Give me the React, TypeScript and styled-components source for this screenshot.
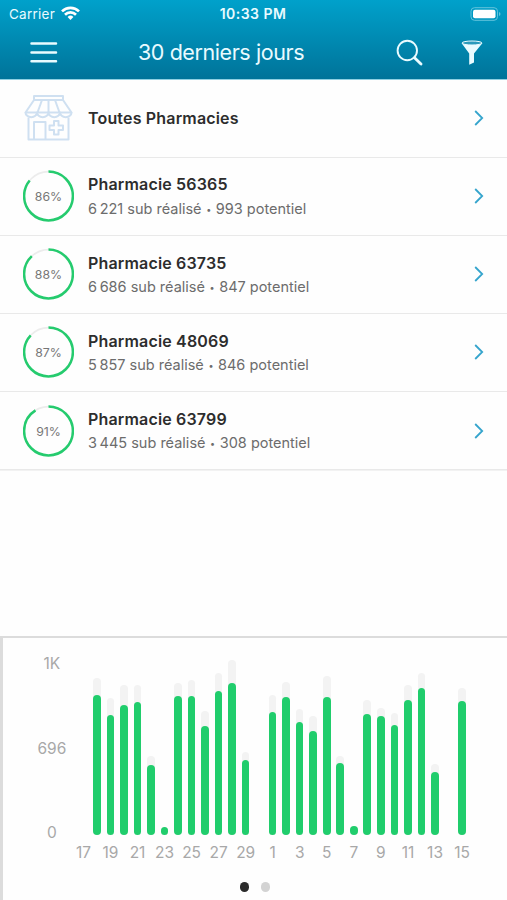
import styled, { createGlobalStyle } from 'styled-components'

const GlobalStyle = createGlobalStyle`
  * {
    box-sizing: border-box;
  }
  body {
    margin: 0;
    background: #fefefe;
    font-family: Inter, 'Liberation Sans', sans-serif;
  }
`
const Page = styled.div`
  display: flex;
  flex-direction: column;
  width: 507px;
  height: 900px;
  overflow: hidden;
`
const Header = styled.header`
  height: 79.6px;
  flex-shrink: 0;
  color: #e9fbff;
  background: linear-gradient(#00a1cb, #007399);
  border-bottom: 1px solid #8fd0e2;
`
const StatusBar = styled.div`
  display: grid;
  grid-template-columns: 1fr auto 1fr;
  align-items: center;
  height: 27px;
  padding: 0 7.5px 0 7.5px;
`
const Carrier = styled.div`
  display: flex;
  align-items: center;
  gap: 6px;
  padding-left: 1.5px;
  font-size: 13.5px;
  letter-spacing: 0.25px;
`
const Time = styled.div`
  margin-right: 1px;
  font-size: 14px;
  font-weight: 600;
  letter-spacing: 0.45px;
`
const BatteryIcon = styled.svg`
  justify-self: end;
  margin-right: -1.5px;
`
const NavBar = styled.div`
  display: grid;
  grid-template-columns: 82px 1fr 82px 60px;
  align-items: center;
  height: 52px;
`
const Title = styled.h1`
  margin: 0 0 2px 56px;
  font-size: 21.5px;
  font-weight: 400;
  line-height: 28px;
  letter-spacing: -0.42px;
  white-space: nowrap;
`
const NavButton = styled.button`
  display: flex;
  padding: 0;
  border: none;
  background: none;
  color: inherit;
`
const MenuButton = styled(NavButton)`
  padding-left: 30px;
`
const SearchButton = styled(NavButton)`
  padding-left: 30.5px;
`
const FilterButton = styled(NavButton)`
  padding-left: 14px;
`
const List = styled.ul`
  margin: 0;
  padding: 0;
  list-style: none;
  border-bottom: 1px solid #f2f2f2;
`
const Row = styled.li`
  display: flex;
  align-items: center;
  height: 78.1px;
  padding: 0 22px 0 23px;
  border-bottom: 1px solid #e9e9e9;
`
const Thumb = styled.div`
  display: flex;
  width: 65px;
  flex-shrink: 0;
`
const RowText = styled.div`
  flex: 1;
  white-space: nowrap;
`
const Name = styled.div`
  color: #2d2d2d;
  font-size: 16px;
  font-weight: 600;
  line-height: 22px;
  letter-spacing: 0.17px;
`
const Detail = styled.div`
  margin-top: 2.6px;
  color: #6c6c6c;
  font-size: 14.5px;
  line-height: 21px;
`
const Bullet = styled.span`
  margin: 0 0.5px;
  font-size: 9px;
  vertical-align: 1.5px;
  line-height: 1;
`
const RingText = styled.text`
  fill: #777;
  font-size: 12.3px;
  text-anchor: middle;
`
const Panel = styled.section`
  display: flex;
  flex-direction: column;
  height: 264px;
  margin-top: auto;
  padding-top: 16px;
  border-top: 2px solid #dcdcdc;
  border-left: 3px solid #dcdcdc;
`
const Chart = styled.div`
  display: flex;
  height: 181px;
`
const YAxis = styled.div`
  display: flex;
  flex-direction: column;
  justify-content: space-between;
  width: 73.7px;
  height: 189px;
  padding-left: 24px;
  flex-shrink: 0;
  color: #a8a8a8;
  font-size: 15.5px;
  line-height: 20px;
  text-align: center;
`
const Plot = styled.div`
  display: flex;
  align-items: flex-end;
`
const Slot = styled.div`
  display: flex;
  justify-content: center;
  width: 13.53px;
  height: 181px;
  align-items: flex-end;
`
const Track = styled.div<{ $height: number }>`
  display: flex;
  align-items: flex-end;
  width: 7.6px;
  height: ${(p) => p.$height}px;
  border-radius: 4px;
  background: #f3f3f3;
`
const Bar = styled.div<{ $height: number }>`
  width: 7.6px;
  height: ${(p) => p.$height}px;
  border-radius: 4px;
  background: #20cd6c;
`
const XAxis = styled.div`
  display: flex;
  margin: 8px 0 0 66.9px;
  color: #a8a8a8;
  font-size: 15.5px;
  line-height: 20px;
`
const Tick = styled.span`
  width: 27.06px;
  text-align: center;
`
const Pager = styled.div`
  display: flex;
  justify-content: center;
  gap: 11.5px;
  margin-top: 19px;
`
const Dot = styled.span<{ $active?: boolean }>`
  width: 9.5px;
  height: 9.5px;
  border-radius: 50%;
  background: ${(p) => (p.$active ? '#2b2b2b' : '#d3d3d3')};
`

const pharmacies = [
  { id: 56365, percent: 86, done: '6\u2009221', potential: 993 },
  { id: 63735, percent: 88, done: '6\u2009686', potential: 847 },
  { id: 48069, percent: 87, done: '5\u2009857', potential: 846 },
  { id: 63799, percent: 91, done: '3\u2009445', potential: 308 },
]

// [done, total] for each day, starting on the 17th
const days = [
  [0, 0], [140, 157], [120.3, 137.5], [129.6, 150], [132.8, 150],
  [70.3, 79.5], [7.6, 7.6], [139.3, 152], [139.3, 155], [109.3, 124],
  [143.6, 162], [152, 175.5], [74.6, 83.5], [0, 0], [123.3, 140.5],
  [137.8, 153.5], [113.5, 126], [104.5, 119.5], [138.1, 159.5], [72, 79.5],
  [9.3, 9.3], [120.8, 135.5], [118.8, 127.5], [109.8, 122.5], [134.6, 150.5],
  [147.3, 162], [62.8, 71.5], [0, 0], [133.6, 147.5],
]
const ticks = [17, 19, 21, 23, 25, 27, 29, 1, 3, 5, 7, 9, 11, 13, 15]

function Ring({ percent }: { percent: number }) {
  return (
    <svg width="51" height="52" viewBox="0 0 51 52">
      <circle cx="25.5" cy="26" r="24.4" fill="none" stroke="#ececec" strokeWidth="1.6" />
      <circle
        cx="25.5"
        cy="26"
        r="24.4"
        fill="none"
        stroke="#25cb6e"
        strokeWidth="2.5"
        pathLength="100"
        strokeDasharray={`${percent} 100`}
        transform="rotate(-90 25.5 26)"
      />
      <RingText x="25.5" y="31">{percent}%</RingText>
    </svg>
  )
}

function Shop() {
  return (
    <svg width="52" height="48" viewBox="0 0 52 48" fill="none" stroke="#cfe0f1" strokeWidth="2" strokeLinejoin="round">
      <path d="M11 2h29v4H11z" />
      <path d="M11 6 2.5 18.5h46L40 6M19 6l-4.5 12.5M25.5 6v12.5M32 6l4.5 12.5" />
      <path d="M2.5 18.5a5.75 4.7 0 0 0 11.5 0a5.75 4.7 0 0 0 11.5 0a5.75 4.7 0 0 0 11.5 0a5.75 4.7 0 0 0 11.5 0" />
      <path d="M5.5 23.5V45.5h40V23.5" />
      <path d="M11 45V28h11.5v17" />
      <path d="M31 27h4.5v4.5H40V36h-4.5v4.5H31V36h-4.5v-4.5H31z" />
    </svg>
  )
}

function Chevron() {
  return (
    <svg width="12" height="18" viewBox="0 0 12 18" fill="none" stroke="#36a5cd" strokeWidth="1.8">
      <path d="m2.2 2 7 7-7 7" />
    </svg>
  )
}

function App() {
  return (
    <Page>
      <GlobalStyle />
      <Header>
        <StatusBar>
          <Carrier>
            Carrier
            <svg width="19" height="15" viewBox="0 0 19 15" fill="none" stroke="#fff" strokeWidth="2.7">
              <path d="M1 5.4a12.2 12.2 0 0 1 17 0M4 8.7a7.8 7.8 0 0 1 11 0" />
              <path d="m9.5 14-2.9-3a4.2 4.2 0 0 1 5.8 0z" fill="#fff" stroke="none" />
            </svg>
          </Carrier>
          <Time>10:33 PM</Time>
          <BatteryIcon width="31" height="14" viewBox="0 0 31 14">
            <rect x="1" y="0.7" width="26.5" height="12.6" rx="3.5" fill="none" stroke="#63c3dc" />
            <rect x="3" y="2.7" width="22.5" height="8.6" rx="2" fill="#fff" />
            <path d="M29 5v4q1.5-.5 1.5-2T29 5" fill="#63c3dc" />
          </BatteryIcon>
        </StatusBar>
        <NavBar>
          <MenuButton>
            <svg width="28" height="24" viewBox="0 0 28 24" stroke="currentColor" strokeWidth="2.5" strokeLinecap="round">
              <path d="M1.5 2.5h24.5M1.5 11.5h24.5M1.5 20.3h24.5" />
            </svg>
          </MenuButton>
          <Title>30 derniers jours</Title>
          <SearchButton>
            <svg width="28" height="28" viewBox="0 0 28 28" fill="none" stroke="currentColor">
              <circle cx="11.3" cy="11.5" r="9.7" strokeWidth="1.9" />
              <path d="m18.5 18.8 6.5 6.2" strokeWidth="2.9" strokeLinecap="round" />
            </svg>
          </SearchButton>
          <FilterButton>
            <svg width="22" height="26" viewBox="0 0 22 26" fill="currentColor">
              <path d="M.5 3 8.2 13.500v11.300l4.800-2.300v-9L21.500 3z" />
              <ellipse cx="11" cy="3" rx="10" ry="2" fill="#2c9abb" stroke="currentColor" strokeWidth="1" />
            </svg>
          </FilterButton>
        </NavBar>
      </Header>
      <List>
        <Row>
          <Thumb><Shop /></Thumb>
          <RowText>
            <Name>Toutes Pharmacies</Name>
          </RowText>
          <Chevron />
        </Row>
        {pharmacies.map((p) => (
          <Row key={p.id}>
            <Thumb><Ring percent={p.percent} /></Thumb>
            <RowText>
              <Name>Pharmacie {p.id}</Name>
              <Detail>{p.done} sub réalisé <Bullet>•</Bullet> {p.potential} potentiel</Detail>
            </RowText>
            <Chevron />
          </Row>
        ))}
      </List>
      <Panel>
        <Chart>
          <YAxis>
            <span>1K</span>
            <span>696</span>
            <span>0</span>
          </YAxis>
          <Plot>
            {days.map(([done, total], i) => (
              <Slot key={i}>
                <Track $height={total}>
                  <Bar $height={done} />
                </Track>
              </Slot>
            ))}
          </Plot>
        </Chart>
        <XAxis>
          {ticks.map((t) => (
            <Tick key={t}>{t}</Tick>
          ))}
        </XAxis>
        <Pager>
          <Dot $active />
          <Dot />
        </Pager>
      </Panel>
    </Page>
  )
}

export default App
